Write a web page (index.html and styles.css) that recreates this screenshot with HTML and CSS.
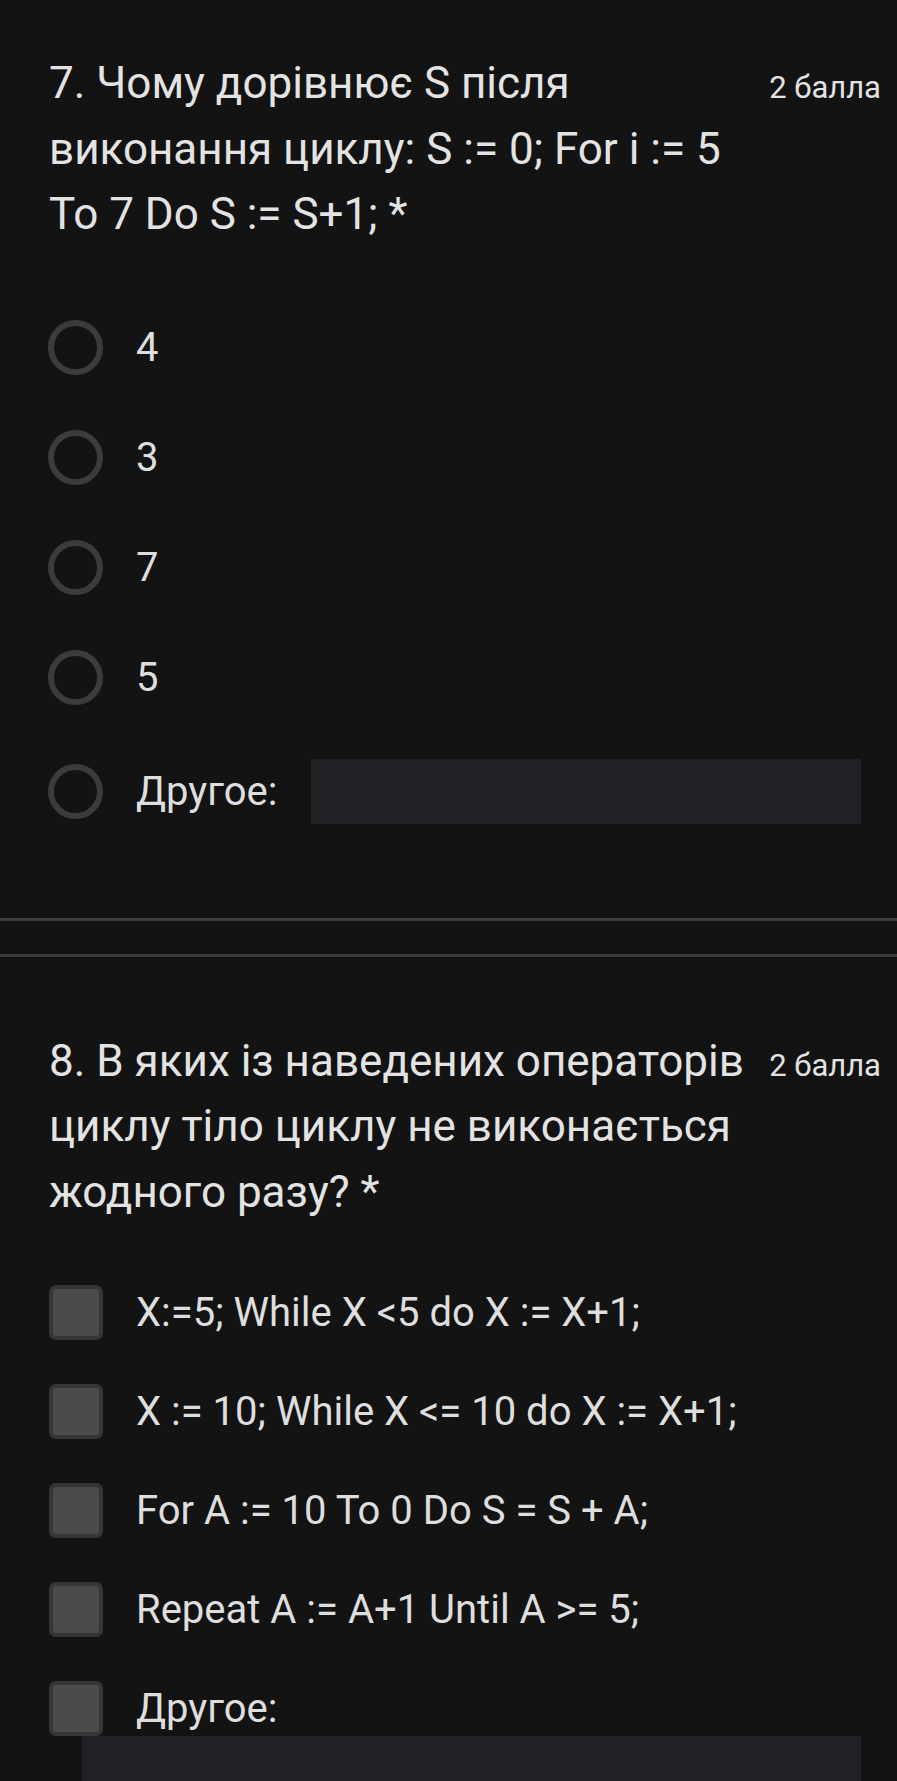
FILE: index.html
```html
<!DOCTYPE html>
<html lang="uk">
<head>
<meta charset="utf-8">
<title>Форма</title>
<link rel="stylesheet" href="styles.css">
</head>
<body>
<section class="card card-first">
  <div class="q-head">
    <div class="q-title">7. Чому дорівнює S після виконання циклу: S := 0; For i := 5 To 7 Do S := S+1; <span class="req">*</span></div>
    <div class="q-points">2 балла</div>
  </div>
  <div class="options">
    <div class="option"><span class="radio"></span><span class="opt-text">4</span></div>
    <div class="option"><span class="radio"></span><span class="opt-text">3</span></div>
    <div class="option"><span class="radio"></span><span class="opt-text">7</span></div>
    <div class="option"><span class="radio"></span><span class="opt-text">5</span></div>
    <div class="option option-other"><span class="radio"></span><span class="opt-text">Другое:</span><span class="other-input"></span></div>
  </div>
</section>
<section class="card card-second">
  <div class="q-head">
    <div class="q-title">8. В яких із наведених операторів циклу тіло циклу не виконається жодного разу? <span class="req">*</span></div>
    <div class="q-points">2 балла</div>
  </div>
  <div class="checks">
    <div class="check-row"><span class="checkbox"></span><span class="opt-text">X:=5; While X &lt;5 do X := X+1;</span></div>
    <div class="check-row"><span class="checkbox"></span><span class="opt-text">X := 10; While X &lt;= 10 do X := X+1;</span></div>
    <div class="check-row"><span class="checkbox"></span><span class="opt-text">For A := 10 To 0 Do S = S + A;</span></div>
    <div class="check-row"><span class="checkbox"></span><span class="opt-text">Repeat A := A+1 Until A &gt;= 5;</span></div>
    <div class="check-row check-other"><span class="checkbox"></span><span class="opt-text">Другое:</span></div>
    <div class="other-input-wide"></div>
  </div>
</section>
</body>
</html>
```
FILE: styles.css
```css
html, body {
  margin: 0;
  padding: 0;
  background: #131313;
}
body {
  font-family: Roboto, "Noto Sans", sans-serif;
  color: #e2e2e2;
  overflow: hidden;
}
.card {
  padding: 0 16px 0 48px;
}
.card-first {
  padding-top: 51px;
  padding-bottom: 71px;
  border-bottom: 3px solid #3d3d3d;
}
.card-second {
  margin-top: 33px;
  padding-top: 72px;
  border-top: 3px solid #3d3d3d;
}
.q-head {
  display: flex;
  align-items: baseline;
  gap: 12px;
}
.q-title {
  flex: 1;
  font-size: 44px;
  line-height: 65.5px;
  padding-left: 1px;
  color: #e3e3e3;
}
.q-points {
  font-size: 31px;
  color: #e3e3e3;
  white-space: nowrap;
}
.options {
  margin-top: 45px;
  display: flex;
  flex-direction: column;
}
.option {
  height: 110px;
  display: flex;
  align-items: center;
  gap: 33px;
}
.option-other {
  margin-top: 4px;
}
.radio {
  width: 43px;
  height: 43px;
  border: 6px solid #3c3c3c;
  border-radius: 50%;
  flex: none;
}
.opt-text {
  font-size: 40px;
  line-height: 55px;
  color: #dedede;
  white-space: nowrap;
}
.other-input {
  flex: 1;
  height: 65px;
  margin-right: 20px;
  background: #202125;
  margin-left: 1px;
}
.checks {
  margin-top: 38px;
  display: flex;
  flex-direction: column;
}
.check-row {
  height: 99px;
  display: flex;
  align-items: center;
  gap: 33px;
}
.check-other {
  height: auto;
  padding-top: 22px;
}
.checkbox {
  width: 46px;
  height: 47px;
  border: 4px solid #363636;
  border-radius: 7px;
  background: #4b4b4b;
  flex: none;
  margin-left: 1px;
}
.other-input-wide {
  margin-left: 34px;
  margin-right: 20px;
  height: 60px;
  background: #202125;
}
```
